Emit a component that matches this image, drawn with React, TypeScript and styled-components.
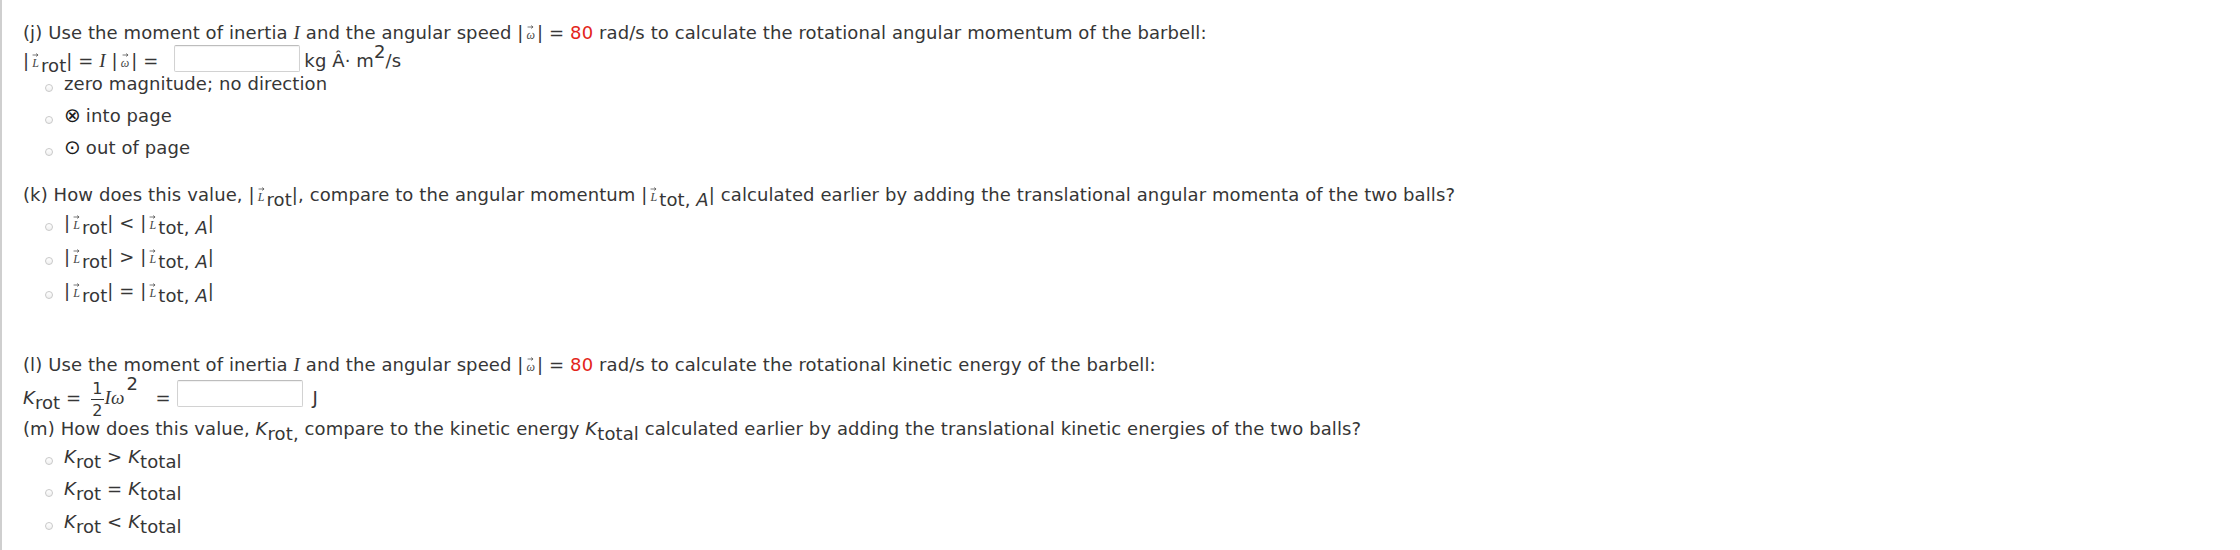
import React from "react";
import styled, { createGlobalStyle } from "styled-components";

const Global = createGlobalStyle`
  html, body { margin: 0; padding: 0; background: #ffffff; }
  body {
    font-family: "DejaVu Sans", Verdana, sans-serif;
    font-size: 18px;
    letter-spacing: 0.1px;
    color: #363636;
  }
`;

const Page = styled.div`
  box-sizing: border-box;
  height: 550px;
  border-left: 2px solid #cfcfcf;
  padding: 23px 0 0 21px;
  overflow: hidden;
`;

const Part = styled.section<{ $gap: number }>`
  margin-bottom: ${(p) => p.$gap}px;
`;

const QLine = styled.div<{ $mb?: number }>`
  line-height: 20px;
  height: 20px;
  white-space: nowrap;
  margin-bottom: ${(p) => p.$mb ?? 0}px;
`;

const AnswerLine = styled.div<{ $mt: number; $mb?: number }>`
  line-height: 23px;
  height: 23px;
  white-space: nowrap;
  margin-top: ${(p) => p.$mt}px;
  margin-bottom: ${(p) => p.$mb ?? 0}px;
`;

const Options = styled.div`
  padding-left: 22px;
`;

const Option = styled.label<{ $h: number }>`
  display: block;
  line-height: 20px;
  height: ${(p) => p.$h}px;
  white-space: nowrap;
  cursor: pointer;
`;

const Radio = styled.span`
  display: inline-block;
  box-sizing: border-box;
  width: 8px;
  height: 8px;
  border-radius: 50%;
  border: 1px solid #c9c9c9;
  background: linear-gradient(#ffffff, #f0f0f0);
  vertical-align: -2px;
  margin-right: 11px;
`;

const Red = styled.span`
  color: #e3241b;
`;

const Ital = styled.span`
  font-family: "Liberation Serif", "Times New Roman", serif;
  font-style: italic;
  font-size: 19px;
`;

const SansItal = styled.span`
  font-style: italic;
`;

const Sub = styled.span`
  vertical-align: -5px;
  line-height: 0;
`;

const Sup = styled.span<{ $raise: number; $ml?: number }>`
  vertical-align: ${(p) => p.$raise}px;
  line-height: 0;
  margin-left: ${(p) => p.$ml ?? 0}px;
`;

const VecWrap = styled.span`
  display: inline-block;
  position: relative;
  font-family: "Liberation Serif", "Times New Roman", serif;
  font-style: italic;
  font-size: 12px;
  line-height: 12px;
  color: #444;
  padding: 0 2px 0 3px;
`;

const VecArrow = styled.svg`
  position: absolute;
  left: 50%;
  top: -4px;
  width: 7px;
  height: 4px;
  transform: translateX(-45%);
`;

const Symbol = styled.span`
  display: inline-block;
  font-size: 20px;
  line-height: 0;
  color: #1a1a1a;
  margin-right: 5px;
`;

const Field = styled.input<{ $ml: number }>`
  box-sizing: border-box;
  width: 126px;
  height: 27px;
  border: 1px solid #d2d2d2;
  border-top-color: #bdbdbd;
  border-radius: 2px;
  box-shadow: inset 0 1px 1px rgba(0, 0, 0, 0.06);
  background: #fff;
  vertical-align: top;
  margin: -4px 4px 0 ${(p) => p.$ml}px;
  padding: 0 4px;
  font: inherit;
  outline: none;
`;

const Frac = styled.span`
  display: inline-flex;
  flex-direction: column;
  align-items: center;
  vertical-align: middle;
  font-size: 16px;
  line-height: 15px;
  margin: -8px 1px -8px 10px;
`;

const Num = styled.span`
  padding: 0 1px 3px;
`;

const Den = styled.span`
  border-top: 1.5px solid #333;
  padding: 3px 1px 0;
`;

const Vec: React.FC<{ s: string }> = ({ s }) => (
  <VecWrap>
    {s}
    <VecArrow viewBox="0 0 8 5">
      <path d="M0.5 2.5 H7.2 M5 0.7 L7.4 2.5 L5 4.3" fill="none" stroke="#444" strokeWidth="0.9" />
    </VecArrow>
  </VecWrap>
);

const LRot = () => (
  <>
    |<Vec s="L" />
    <Sub>rot</Sub>|
  </>
);

const LTot = () => (
  <>
    |<Vec s="L" />
    <Sub>
      tot, <SansItal>A</SansItal>
    </Sub>
    |
  </>
);

const KSub: React.FC<{ s: string }> = ({ s }) => (
  <>
    <SansItal>K</SansItal>
    <Sub>{s}</Sub>
  </>
);

const Opt: React.FC<{ h: number; children: React.ReactNode }> = ({ h, children }) => (
  <Option $h={h}>
    <Radio />
    {children}
  </Option>
);

export default function App() {
  return (
    <>
      <Global />
      <Page>
        <Part $gap={15}>
          <QLine>
            (j) Use the moment of inertia <Ital>I</Ital> and the angular speed |<Vec s="ω" />| = <Red>80</Red> rad/s
            to calculate the rotational angular momentum of the barbell:
          </QLine>
          <AnswerLine $mt={6} $mb={2}>
            <LRot /> = <Ital>I</Ital> |<Vec s="ω" />| = <Field $ml={10} type="text" aria-label="angular momentum" />
            kg Â· m<Sup $raise={9}>2</Sup>/s
          </AnswerLine>
          <Options>
            <Opt h={32}>zero magnitude; no direction</Opt>
            <Opt h={32}>
              <Symbol>⊗</Symbol>into page
            </Opt>
            <Opt h={32}>
              <Symbol>⊙</Symbol>out of page
            </Opt>
          </Options>
        </Part>

        <Part $gap={40}>
          <QLine $mb={8}>
            (k) How does this value, <LRot />, compare to the angular momentum <LTot /> calculated earlier by adding
            the translational angular momenta of the two balls?
          </QLine>
          <Options>
            <Opt h={34}>
              <LRot /> &lt; <LTot />
            </Opt>
            <Opt h={34}>
              <LRot /> &gt; <LTot />
            </Opt>
            <Opt h={34}>
              <LRot /> = <LTot />
            </Opt>
          </Options>
        </Part>

        <Part $gap={12}>
          <QLine>
            (l) Use the moment of inertia <Ital>I</Ital> and the angular speed |<Vec s="ω" />| = <Red>80</Red> rad/s
            to calculate the rotational kinetic energy of the barbell:
          </QLine>
          <AnswerLine $mt={9}>
            <KSub s="rot" /> =
            <Frac>
              <Num>1</Num>
              <Den>2</Den>
            </Frac>
            <Ital>Iω</Ital>
            <Sup $raise={14} $ml={2}>2</Sup> &nbsp;&nbsp;= <Field $ml={0} type="text" aria-label="kinetic energy" /> J
          </AnswerLine>
        </Part>

        <Part $gap={0}>
          <QLine $mb={8}>
            (m) How does this value, <SansItal>K</SansItal>
            <Sub>rot,</Sub> compare to the kinetic energy <KSub s="total" /> calculated earlier by adding the
            translational kinetic energies of the two balls?
          </QLine>
          <Options>
            <Opt h={32}>
              <KSub s="rot" /> &gt; <KSub s="total" />
            </Opt>
            <Opt h={33}>
              <KSub s="rot" /> = <KSub s="total" />
            </Opt>
            <Opt h={33}>
              <KSub s="rot" /> &lt; <KSub s="total" />
            </Opt>
          </Options>
        </Part>
      </Page>
    </>
  );
}
